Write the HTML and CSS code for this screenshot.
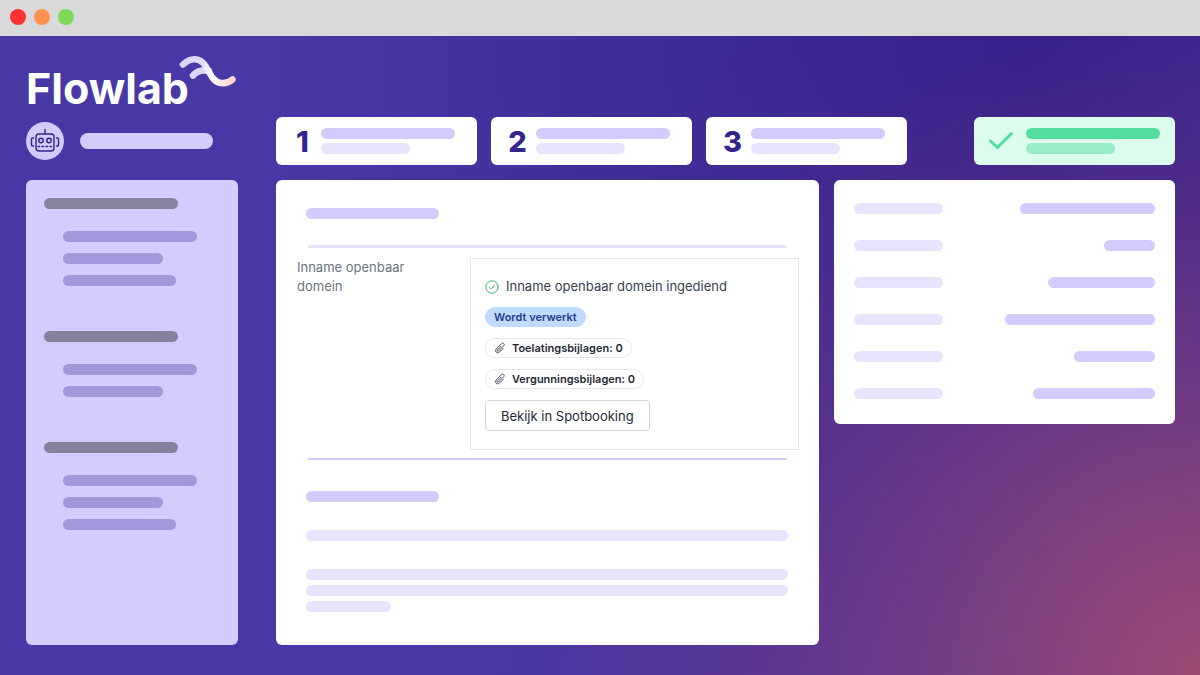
FILE: index.html
```html
<!doctype html>
<html lang="nl">
<head>
    <meta charset="UTF-8">
    <meta name="viewport" content="width=device-width, initial-scale=1.0">
    <title>Flowlab</title>
    <link rel="stylesheet" href="styles.css">
</head>
<body>
    <div class="titlebar">
        <span class="dot red"></span>
        <span class="dot orange"></span>
        <span class="dot green"></span>
    </div>
    <div class="app">
        <aside class="side">
            <div class="logo">
                <span class="logo-text">Flowlab</span>
                <svg class="logo-wave" width="58" height="34" viewBox="0 0 58 34" fill="none" stroke-linecap="round" stroke-width="6.5">
                    <defs>
                        <linearGradient id="wave" gradientUnits="userSpaceOnUse" x1="4" y1="8" x2="54" y2="26">
                            <stop offset="0" stop-color="#dcd5fb"/>
                            <stop offset="0.35" stop-color="#e2dcfc"/>
                            <stop offset="0.55" stop-color="#fbf9ff"/>
                            <stop offset="0.75" stop-color="#fff1f0"/>
                            <stop offset="1" stop-color="#ffd3cf"/>
                        </linearGradient>
                    </defs>
                    <path stroke="#dcd5fb" d="M14 21.500C18 17 24 15.500 30 17"/>
                    <path stroke="url(#wave)" d="M4 10.500C12 3 21 3.500 26.500 12C31.500 20 34 28 42 29C46 29.500 50 28.500 53.500 25.500"/>
                </svg>
            </div>
            <div class="user">
                <div class="avatar">
                    <svg width="30" height="26" viewBox="0 0 30 26" fill="none" stroke="#35248c" stroke-width="1.4" stroke-linecap="round">
                        <path d="M15 1.5V6"/>
                        <rect x="6" y="6" width="18" height="17" rx="3"/>
                        <circle cx="11" cy="12.5" r="2.2"/>
                        <circle cx="19" cy="12.5" r="2.2"/>
                        <path d="M8 18.5h14" stroke-dasharray="1.6 2.4"/>
                        <path d="M3.5 10H2.5a1 1 0 0 0-1 1v6a1 1 0 0 0 1 1h1M26.500 10h1a1 1 0 0 1 1 1v6a1 1 0 0 1-1 1h-1"/>
                    </svg>
                </div>
                <div class="bar user-name"></div>
            </div>
            <nav class="panel menu">
                <div class="menu-group">
                    <div class="bar title"></div>
                    <div class="bar item"></div>
                    <div class="bar item short"></div>
                    <div class="bar item medium"></div>
                </div>
                <div class="menu-group">
                    <div class="bar title"></div>
                    <div class="bar item"></div>
                    <div class="bar item short"></div>
                </div>
                <div class="menu-group">
                    <div class="bar title"></div>
                    <div class="bar item"></div>
                    <div class="bar item short"></div>
                    <div class="bar item medium"></div>
                </div>
            </nav>
        </aside>
        <main class="main">
            <div class="steps">
                <div class="step">
                    <span class="step-nr">1</span>
                    <div class="step-lines"><div class="bar"></div><div class="bar light"></div></div>
                </div>
                <div class="step">
                    <span class="step-nr">2</span>
                    <div class="step-lines"><div class="bar"></div><div class="bar light"></div></div>
                </div>
                <div class="step">
                    <span class="step-nr">3</span>
                    <div class="step-lines"><div class="bar"></div><div class="bar light"></div></div>
                </div>
                <div class="step done">
                    <span class="step-nr">
                        <svg width="26" height="20" viewBox="0 0 26 20" fill="none" stroke="#53dd9c" stroke-width="3" stroke-linecap="round" stroke-linejoin="miter">
                            <path d="M2.500 10L9.500 16.500L23.500 2.500"/>
                        </svg>
                    </span>
                    <div class="step-lines"><div class="bar"></div><div class="bar light"></div></div>
                </div>
            </div>
            <div class="content">
                <section class="panel detail">
                    <div class="bar heading"></div>
                    <hr class="rule thick">
                    <div class="field">
                        <div class="field-label">Inname openbaar domein</div>
                        <div class="card">
                            <div class="status">
                                <svg width="14" height="14" viewBox="0 0 14 14" fill="none" stroke="#3fb56f" stroke-linecap="round" stroke-linejoin="round">
                                    <circle cx="7" cy="7" r="6.200"/>
                                    <path d="M4.500 7.300L6.200 9L9.500 5.300"/>
                                </svg>
                                Inname openbaar domein ingediend
                            </div>
                            <span class="pill blue">Wordt verwerkt</span>
                            <span class="pill">
                                <svg class="clip" width="12" height="12" viewBox="0 0 24 24"><path d="m18.400 12.700-7.700 7.700a4.500 4.500 0 0 1-6.400-6.400l10.900-10.900a3 3 0 1 1 4.300 4.300L8.600 18.300a1.500 1.500 0 0 1-2.100-2.100l7.700-7.700"/></svg>
                                Toelatingsbijlagen: 0
                            </span>
                            <span class="pill">
                                <svg class="clip" width="12" height="12" viewBox="0 0 24 24"><path d="m18.400 12.700-7.700 7.700a4.500 4.500 0 0 1-6.400-6.400l10.900-10.900a3 3 0 1 1 4.300 4.300L8.600 18.300a1.500 1.500 0 0 1-2.100-2.100l7.700-7.700"/></svg>
                                Vergunningsbijlagen: 0
                            </span>
                            <button class="btn" type="button">Bekijk in Spotbooking</button>
                        </div>
                    </div>
                    <hr class="rule">
                    <div class="bar heading second"></div>
                    <div class="bar light line"></div>
                    <div class="paragraph">
                        <div class="bar light"></div>
                        <div class="bar light"></div>
                        <div class="bar light last"></div>
                    </div>
                </section>
                <section class="panel summary">
                    <div class="row"><div class="bar light"></div><div class="bar" style="width: 135px"></div></div>
                    <div class="row"><div class="bar light"></div><div class="bar" style="width: 51px"></div></div>
                    <div class="row"><div class="bar light"></div><div class="bar" style="width: 107px"></div></div>
                    <div class="row"><div class="bar light"></div><div class="bar" style="width: 150px"></div></div>
                    <div class="row"><div class="bar light"></div><div class="bar" style="width: 81px"></div></div>
                    <div class="row"><div class="bar light"></div><div class="bar" style="width: 122px"></div></div>
                </section>
            </div>
        </main>
    </div>
</body>
</html>
```
FILE: styles.css
```css
* {
    margin: 0;
    padding: 0;
    box-sizing: border-box;
}

body {
    display: flex;
    flex-direction: column;
    min-height: 100vh;
    font-family: Inter, "Liberation Sans", sans-serif;
    font-size: 13px;
    color: #374151;
}

.titlebar {
    display: flex;
    align-items: center;
    gap: 8px;
    height: 36px;
    padding: 0 10px 3px;
    background-color: #d9d9d9;
}

.dot {
    width: 16px;
    height: 16px;
    border-radius: 50%;
}

.dot.red {
    background-color: #ff3131;
}

.dot.orange {
    background-color: #ff914d;
}

.dot.green {
    background-color: #7ed957;
}

.app {
    flex: 1;
    display: flex;
    gap: 38px;
    padding: 18px 25px 30px 26px;
    background:
        radial-gradient(circle at 100% 100%, #9c4b74 0%, rgba(140, 68, 120, 0.75) 16%, rgba(115, 56, 125, 0.45) 32%, rgba(90, 45, 135, 0.15) 48%, rgba(70, 50, 160, 0) 60%),
        radial-gradient(circle at 86% 4%, #321e8a 0%, rgba(54, 32, 138, 0.6) 26%, rgba(60, 40, 150, 0) 64%),
        #4838a6;
}

.bar {
    height: 11px;
    border-radius: 6px;
    background-color: #d3cbfb;
}

.bar.light {
    background-color: #e8e4fd;
}

.panel {
    border-radius: 6px;
    background-color: #fff;
}

/* left column */

.side {
    display: flex;
    flex-direction: column;
    width: 212px;
}

.logo {
    display: flex;
    align-items: flex-start;
    height: 68px;
}

.logo-text {
    padding-top: 9px;
    font-size: 43px;
    font-weight: 700;
    line-height: 50px;
    color: #fff;
}

.logo-wave {
    flex: none;
    margin-left: -10px;
}

.user {
    display: flex;
    align-items: center;
    gap: 16px;
    margin-bottom: 20px;
}

.avatar {
    display: flex;
    align-items: center;
    justify-content: center;
    width: 38px;
    height: 38px;
    border-radius: 50%;
    background-color: #d3cbfb;
}

.user-name {
    width: 133px;
    height: 16px;
    border-radius: 8px;
}

.menu {
    flex: 1;
    display: flex;
    flex-direction: column;
    gap: 45px;
    padding: 18px;
    background-color: #d4ccff;
}

.menu-group {
    display: flex;
    flex-direction: column;
    gap: 11px;
}

.menu .title {
    width: 134px;
    margin-bottom: 11px;
    background-color: #87819e;
}

.menu .item {
    width: 134px;
    margin-left: 19px;
    background-color: #a398dc;
}

.menu .short {
    width: 100px;
}

.menu .medium {
    width: 113px;
}

/* right side */

.main {
    flex: 1;
    display: flex;
    flex-direction: column;
    gap: 15px;
    padding-top: 63px;
}

.steps {
    display: flex;
    gap: 14px;
}

.step {
    display: flex;
    align-items: center;
    width: 201px;
    height: 48px;
    border-radius: 6px;
    background-color: #fff;
}

.step-nr {
    width: 45px;
    padding-left: 8px;
    text-align: center;
    font-size: 29px;
    font-weight: 800;
    color: #35248c;
}

.step-lines {
    width: 134px;
}

.step-lines .bar.light {
    width: 89px;
    margin-top: 4px;
}

.step.done {
    margin-left: auto;
    background-color: #dcfdee;
}

.step.done .step-nr {
    display: flex;
    width: 52px;
    padding-left: 14px;
}

.step.done .bar {
    background-color: #53dd9c;
}

.step.done .bar.light {
    background-color: #98edc6;
}

.content {
    flex: 1;
    display: grid;
    grid-template-columns: 543fr 341fr;
    align-items: start;
    gap: 15px;
}

.detail {
    height: 100%;
    padding: 28px 20px;
}

.heading {
    width: 133px;
    margin-left: 10px;
}

.rule {
    height: 2px;
    margin: 8px 12px 0;
    border: none;
    background-color: #d3cbfb;
}

.rule.thick {
    height: 3px;
    margin-top: 26px;
    background-color: #e8e4fd;
}

.field {
    display: grid;
    grid-template-columns: 173px 1fr;
    margin-top: 10px;
    padding-left: 1px;
}

.field-label {
    width: 130px;
    line-height: 19px;
    color: #6b7280;
}

.card {
    display: flex;
    flex-direction: column;
    align-items: flex-start;
    gap: 11px;
    padding: 18px 14px;
    border: 1px solid #e5e7eb;
}

.status {
    display: flex;
    align-items: center;
    gap: 7px;
    line-height: 19px;
}

.pill {
    display: flex;
    align-items: center;
    gap: 6px;
    height: 20px;
    padding: 0 8px;
    border: 1px solid #e5e7eb;
    border-radius: 10px;
    font-size: 11px;
    font-weight: 600;
    color: #1f2937;
}

.pill.blue {
    border-color: #bfdbfe;
    background-color: #bfdbfe;
    color: #1e3a8a;
}

.clip {
    fill: none;
    stroke: #4b5563;
    stroke-width: 2;
    stroke-linecap: round;
}

.btn {
    height: 31px;
    padding: 0 15px;
    border: 1px solid #d1d5db;
    border-radius: 4px;
    background-color: #fff;
    font: inherit;
    color: #1f2937;
}

.heading.second {
    margin-top: 31px;
}

.line {
    margin: 28px 11px 0 10px;
}

.paragraph {
    display: flex;
    flex-direction: column;
    gap: 5px;
    margin: 28px 11px 0 10px;
}

.paragraph .last {
    width: 85px;
}

.summary {
    display: flex;
    flex-direction: column;
    gap: 26px;
    padding: 23px 20px 25px;
}

.row {
    display: flex;
    justify-content: space-between;
}

.row .light {
    width: 89px;
}
```
